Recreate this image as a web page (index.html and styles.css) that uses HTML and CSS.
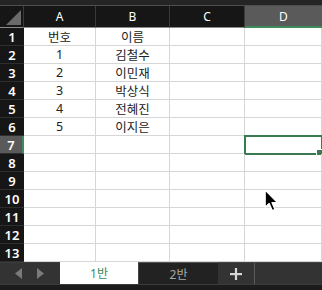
FILE: index.html
```html
<!DOCTYPE html>
<html lang="ko">
<head>
<meta charset="utf-8">
<link rel="stylesheet" href="styles.css">
</head>
<body>
<div class="app">
  <div class="topstrip"></div>
  <div class="grid">
    <div class="corner"><svg width="16" height="15" viewBox="0 0 16 15"><polygon points="16,0 16,15 1,15" fill="#6a6a6a"/></svg></div>
    <div class="ch">A</div><div class="ch">B</div><div class="ch">C</div><div class="ch sel">D</div>

    <div class="rh">1</div><div class="c">번호</div><div class="c">이름</div><div class="c"></div><div class="c"></div>
    <div class="rh">2</div><div class="c">1</div><div class="c">김철수</div><div class="c"></div><div class="c"></div>
    <div class="rh">3</div><div class="c">2</div><div class="c">이민재</div><div class="c"></div><div class="c"></div>
    <div class="rh">4</div><div class="c">3</div><div class="c">박상식</div><div class="c"></div><div class="c"></div>
    <div class="rh">5</div><div class="c">4</div><div class="c">전혜진</div><div class="c"></div><div class="c"></div>
    <div class="rh">6</div><div class="c">5</div><div class="c">이지은</div><div class="c"></div><div class="c"></div>
    <div class="rh sel">7</div><div class="c"></div><div class="c"></div><div class="c"></div><div class="c active"><span class="handle"></span></div>
    <div class="rh">8</div><div class="c"></div><div class="c"></div><div class="c"></div><div class="c"></div>
    <div class="rh">9</div><div class="c"></div><div class="c"></div><div class="c"></div><div class="c"></div>
    <div class="rh">10</div><div class="c"></div><div class="c"></div><div class="c"></div><div class="c"></div>
    <div class="rh">11</div><div class="c"></div><div class="c"></div><div class="c"></div><div class="c"></div>
    <div class="rh">12</div><div class="c"></div><div class="c"></div><div class="c"></div><div class="c"></div>
    <div class="rh">13</div><div class="c"></div><div class="c"></div><div class="c"></div><div class="c"></div>
  </div>
  <div class="tabbar">
    <div class="nav">
      <svg width="7" height="11" viewBox="0 0 7 11"><polygon points="7,0 7,11 0,5.5" fill="#7a7a7a"/></svg>
      <svg width="7" height="11" viewBox="0 0 7 11"><polygon points="0,0 0,11 7,5.5" fill="#7a7a7a"/></svg>
    </div>
    <div class="tab active-tab">1반</div>
    <div class="tab other-tab">2반</div>
    <div class="add"><svg width="12" height="12" viewBox="0 0 12 12"><rect x="0" y="5" width="12" height="2.2" fill="#d8d8d8"/><rect x="4.9" y="0" width="2.2" height="12" fill="#d8d8d8"/></svg></div>
    <div class="rest"></div>
  </div>
  <div class="bottomstrip"></div>
  <svg class="cursor" width="16" height="25" viewBox="0 0 14 22"><path d="M1 1 L1 16 L4.5 12.8 L7.2 19 L9.6 18 L7 11.9 L11.8 11.9 Z" fill="#000" stroke="#fff" stroke-width="1.1" stroke-linejoin="round"/></svg>
</div>
</body>
</html>
```
FILE: styles.css
```css
html, body { margin: 0; padding: 0; }
body { width: 322px; height: 290px; overflow: hidden; background: #fff; font-family: "Noto Sans", "Noto Sans CJK KR", sans-serif; }
.app { position: relative; width: 322px; height: 290px; display: flex; flex-direction: column; }
.topstrip { height: 5px; background: #252525; border-bottom: 1px solid #4d4d4d; flex: none; }
.grid {
  display: grid;
  grid-template-columns: 24px 72px 74px 75px 77px;
  grid-template-rows: 22px repeat(13, 18px);
  flex: none;
}
.corner { background: #161616; border-right: 1px solid #3a3a3a; border-bottom: 1px solid #8a8a8a; box-sizing: border-box; display: flex; align-items: flex-end; justify-content: flex-end; padding: 0 2px 2px 0; }
.ch { background: #161616; color: #fff; font-size: 12px; display: flex; align-items: center; justify-content: center; border-right: 1px solid #3a3a3a; border-bottom: 1px solid #8a8a8a; box-sizing: border-box; }
.ch.sel { background: #5a5a5a; border-bottom: 2px solid #3e8a5a; border-right: none; }
.rh { background: #161616; color: #fff; font-size: 13px; font-weight: 600; display: flex; align-items: center; justify-content: center; border-bottom: 1px solid #2e2e2e; box-sizing: border-box; }
.rh.sel { background: #5a5a5a; border-right: 2px solid #3e8a5a; }
.c { color: #222; font-size: 12.5px; display: flex; align-items: center; justify-content: center; border-right: 1px solid #d6d6d6; border-bottom: 1px solid #d6d6d6; box-sizing: border-box; position: relative; }
.c.active { outline: 2px solid #3a7a50; outline-offset: -1px; border-color: transparent; }
.handle { position: absolute; right: -2px; bottom: -3px; width: 5px; height: 5px; background: #3a7a50; border: 1px solid #fff; }
.tabbar { height: 22px; display: flex; background: #333; flex: none; }
.nav { width: 60px; display: flex; align-items: center; gap: 15px; padding-left: 15px; box-sizing: border-box; border-top: 1px solid #3c3c3c; }
.tab { width: 78px; display: flex; align-items: center; justify-content: center; font-size: 12px; box-sizing: border-box; }
.active-tab { background: #fff; color: #3b8a5c; }
.other-tab { width: 80px; background: #222; color: #a8a8a8; border-top: 1px solid #555; border-left: 1px solid #444; }
.add { width: 37px; display: flex; align-items: center; justify-content: center; border-right: 1px solid #5a5a5a; border-top: 1px solid #444; box-sizing: border-box; }
.rest { flex: 1; border-top: 1px solid #444; }
.bottomstrip { flex: 1; background: #1c1c1c; border-top: 1px solid #3a3a3a; }
.cursor { position: absolute; left: 264px; top: 189px; }
```
